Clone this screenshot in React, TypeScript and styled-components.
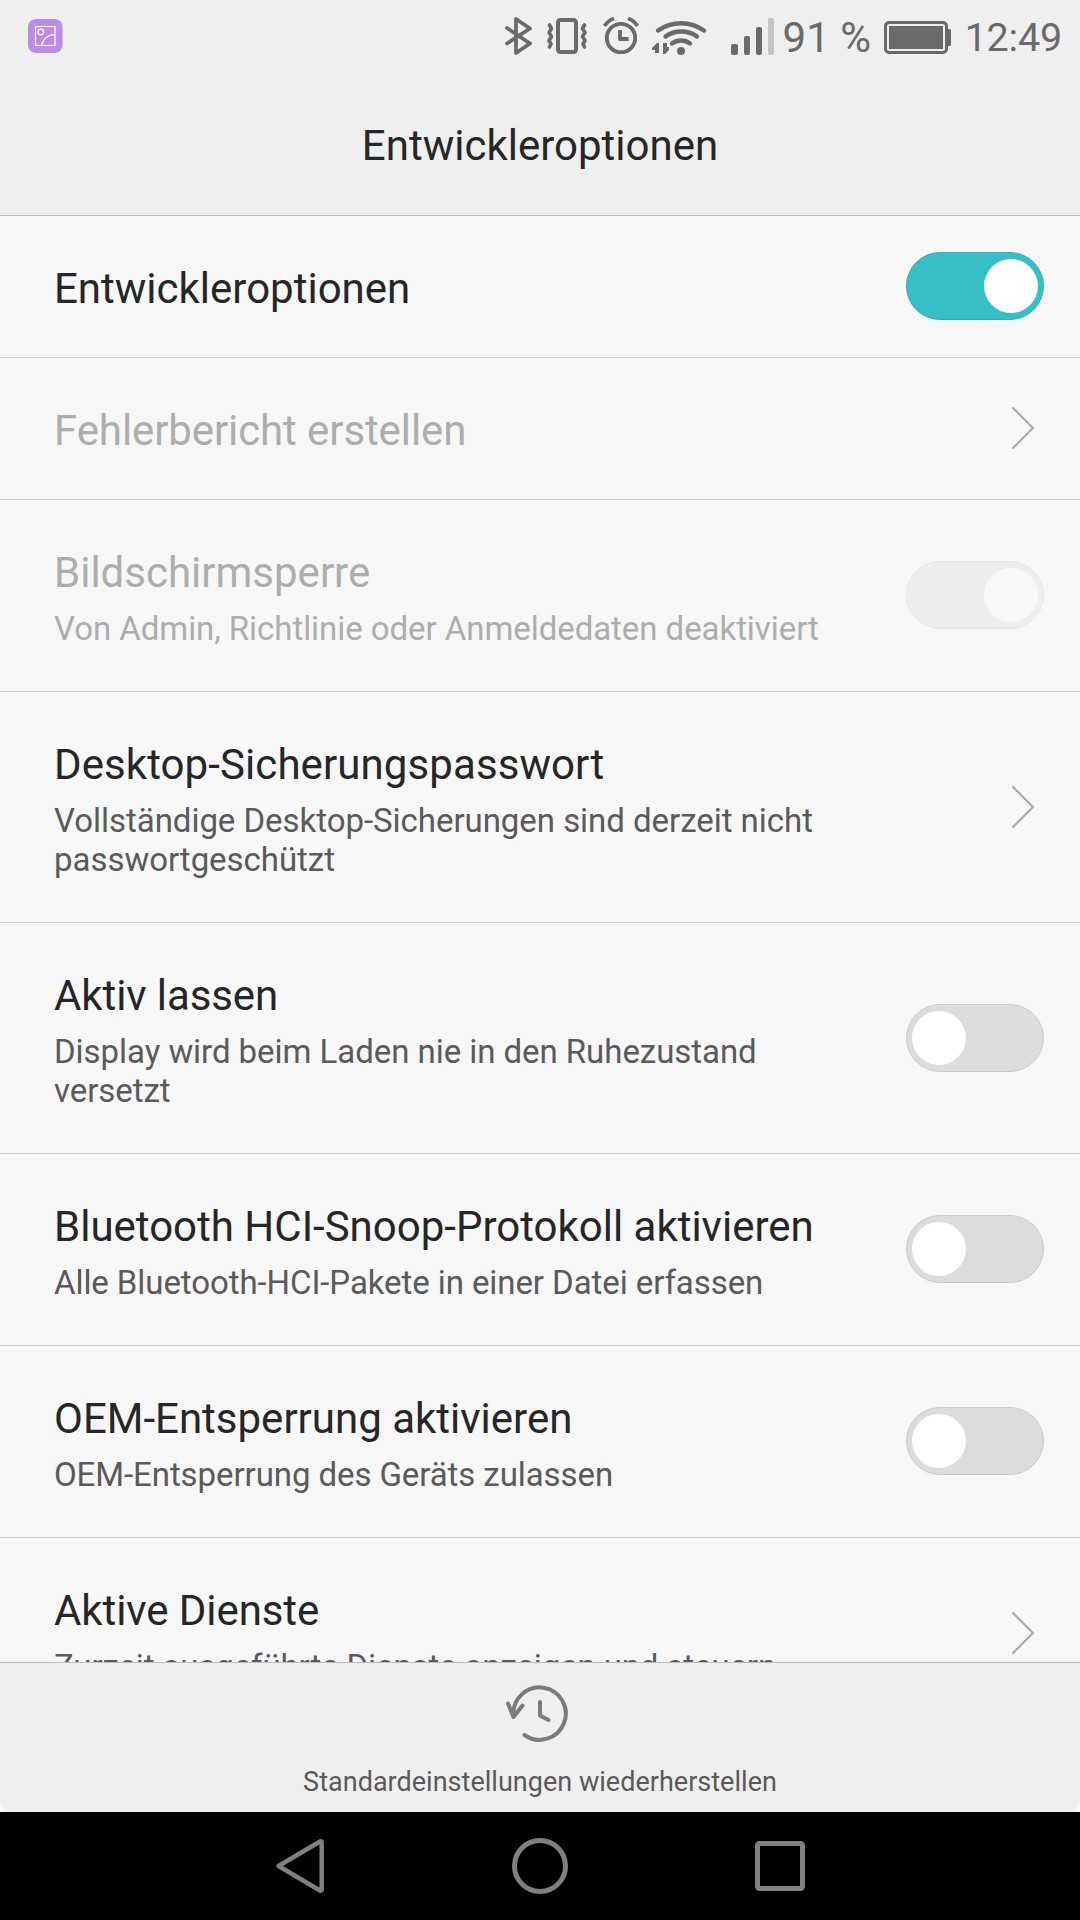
import React from "react";
import styled, { createGlobalStyle, css } from "styled-components";

const GlobalStyle = createGlobalStyle`
  * { box-sizing: border-box; }
  body { margin: 0; background: #f7f7f7; }
`;

const Screen = styled.div`
  width: 1080px;
  height: 1920px;
  display: flex;
  flex-direction: column;
  overflow: hidden;
  background: #f7f7f7;
  color: #262626;
  font-family: Roboto, "Noto Sans", sans-serif;
`;

const Header = styled.header`
  height: 216px;
  flex: none;
  background: #efefef;
  border-bottom: 1px solid #bdbdbd;
`;

const StatusBar = styled.div`
  height: 72px;
  display: flex;
  align-items: center;
  justify-content: space-between;
  padding: 0 18px 0 28px;
  color: #6a6a6a;
`;

const StatusGroup = styled.div`
  display: flex;
  align-items: center;
`;

const StatusIcons = styled.svg`
  display: block;
  width: 294px;
  height: 72px;
  margin-right: -1.4px;
`;

const BatteryIcon = styled.svg`
  display: block;
  width: 68px;
  height: 72px;
  margin: 0 12.7px 0 13px;
`;

const StatusText = styled.span<{ $size: number; $tracking?: number }>`
  font-size: ${(p) => p.$size}px;
  letter-spacing: ${(p) => p.$tracking ?? 0}px;
  line-height: 48px;
  padding-top: 4px;
  white-space: pre;
`;

const Title = styled.h1`
  margin: 0;
  height: 143px;
  padding-top: 49px;
  text-align: center;
  font-size: 42px;
  font-weight: 400;
  line-height: 49px;
`;

const List = styled.main`
  flex: 1;
  min-height: 0;
  overflow: hidden;
`;

const Row = styled.div<{ $disabled?: boolean }>`
  display: flex;
  align-items: center;
  justify-content: space-between;
  padding: 46px 36px 46px 54px;
  border-bottom: 1px solid #d0d0d0;
  ${(p) => p.$disabled && css`color: #adadad;`}
`;

const RowText = styled.div`
  width: 796px;
  margin: 2px 0 -2px;
`;

const RowTitle = styled.div<{ $tracking?: number }>`
  font-size: 42px;
  line-height: 49px;
  letter-spacing: ${(p) => p.$tracking ?? 0}px;
`;

const RowSummary = styled.div<{ $disabled?: boolean; $tracking?: number }>`
  margin: 12px 0 -1px;
  font-size: 33px;
  line-height: 39px;
  letter-spacing: ${(p) => p.$tracking ?? 0}px;
  color: ${(p) => (p.$disabled ? "#adadad" : "#5a5a5a")};
`;

const Track = styled.div<{ $on?: boolean; $disabled?: boolean }>`
  flex: none;
  display: flex;
  align-items: center;
  justify-content: ${(p) => (p.$on ? "flex-end" : "flex-start")};
  width: 138px;
  height: 68px;
  margin: -10.5px 0 -9.5px;
  padding: 0 5px;
  border-radius: 34px;
  border: 1px solid ${(p) => (p.$disabled ? "#e7e7e7" : p.$on ? "#34aeb3" : "#cbcbcb")};
  background: ${(p) => (p.$disabled ? "#eeeeee" : p.$on ? "#36c0c6" : "#dcdcdc")};
`;

const Knob = styled.div<{ $disabled?: boolean }>`
  width: 54px;
  height: 54px;
  border-radius: 50%;
  background: ${(p) => (p.$disabled ? "#f8f8f8" : "#ffffff")};
`;

const ChevronIcon = styled.svg`
  flex: none;
  display: block;
  width: 24px;
  height: 44px;
  margin: -0.5px 9px 0.5px 0;
`;

const Footer = styled.footer`
  flex: none;
  height: 150px;
  border-top: 1px solid #bdbdbd;
  background: #f7f7f7;
`;

const FooterAction = styled.div`
  height: 149px;
  display: flex;
  flex-direction: column;
  align-items: center;
  background: #efefef;
  border-radius: 0 0 14px 14px;
  color: #5a5a5a;
  font-size: 27px;
  line-height: 32px;
  letter-spacing: 0.02px;
`;

const RestoreIcon = styled.svg`
  display: block;
  width: 66px;
  height: 62px;
  margin: 20px 6px 21px 0;
`;

const NavBar = styled.nav`
  flex: none;
  height: 108px;
  display: flex;
  justify-content: center;
  align-items: center;
  gap: 180px;
  background: #000;
`;

const NavIcon = styled.svg`
  display: block;
  width: 60px;
  height: 60px;
`;

function Chevron() {
  return (
    <ChevronIcon viewBox="0 0 24 44" fill="none" stroke="#aaaaaa" strokeWidth="2" strokeLinecap="round">
      <path d="M2 2 22 22 2 42" />
    </ChevronIcon>
  );
}

function Toggle({ on, disabled }: { on?: boolean; disabled?: boolean }) {
  return (
    <Track $on={on} $disabled={disabled}>
      <Knob $disabled={disabled} />
    </Track>
  );
}

type Item = {
  title: string;
  titleTracking?: number;
  summary?: string;
  summaryTracking?: number;
  control: "toggle" | "chevron";
  on?: boolean;
  disabled?: boolean;
};

const items: Item[] = [
  { title: "Entwickleroptionen", control: "toggle", on: true },
  { title: "Fehlerbericht erstellen", titleTracking: -0.1, control: "chevron", disabled: true },
  {
    title: "Bildschirmsperre",
    summary: "Von Admin, Richtlinie oder Anmeldedaten deaktiviert",
    summaryTracking: -0.06,
    control: "toggle",
    on: true,
    disabled: true,
  },
  {
    title: "Desktop-Sicherungspasswort",
    titleTracking: 0.09,
    summary: "Vollständige Desktop-Sicherungen sind derzeit nicht passwortgeschützt",
    summaryTracking: -0.04,
    control: "chevron",
  },
  {
    title: "Aktiv lassen",
    titleTracking: -0.1,
    summary: "Display wird beim Laden nie in den Ruhezustand versetzt",
    summaryTracking: -0.05,
    control: "toggle",
  },
  {
    title: "Bluetooth HCI-Snoop-Protokoll aktivieren",
    summary: "Alle Bluetooth-HCI-Pakete in einer Datei erfassen",
    summaryTracking: -0.08,
    control: "toggle",
  },
  {
    title: "OEM-Entsperrung aktivieren",
    summary: "OEM-Entsperrung des Geräts zulassen",
    summaryTracking: -0.08,
    control: "toggle",
  },
  {
    title: "Aktive Dienste",
    titleTracking: -0.08,
    summary: "Zurzeit ausgeführte Dienste anzeigen und steuern",
    summaryTracking: -0.12,
    control: "chevron",
  },
];

function GalleryIcon() {
  return (
    <svg width="35" height="72" viewBox="28 0 35 72" fill="none" stroke="#fff" strokeWidth="1.2">
      <rect x="28" y="19" width="34.5" height="34" rx="8" fill="#bd8be6" stroke="none" />
      <rect x="35.5" y="26.5" width="19.5" height="19" />
      <circle cx="40.8" cy="32" r="2.8" />
      <path d="M41.5 45.5C43 39 48 34.5 55 34.5" />
    </svg>
  );
}

function SystemIcons() {
  return (
    <StatusIcons viewBox="490 0 294 72" fill="none" stroke="#6a6a6a" strokeLinecap="round" strokeLinejoin="round">
      <path strokeWidth="3.8" d="M507 28 530 43.5 516 53V19L530 28.5 507 43.5" />
      <rect x="558" y="20" width="18" height="32" rx="2.5" strokeWidth="4" />
      <path
        strokeWidth="3.6"
        d="M549.5 25l2 3.500-2.500 4 2.500 4-2.500 4 2 3.500-1.500 3M584.5 25l-2 3.500 2.500 4-2.500 4 2.500 4-2 3.500 1.500 3"
      />
      <circle cx="621" cy="38" r="14.2" strokeWidth="3.8" />
      <path
        strokeWidth="3.8"
        strokeLinecap="butt"
        d="M620 30V39h8.500M604.500 26Q608 20.500 614 18.500M637.500 26Q634 20.500 628 18.500"
      />
      <g strokeWidth="4.4">
        <path d="M658 30.500a40 40 0 0 1 46 0" />
        <path d="M665.500 36.500a27 27 0 0 1 31.500 0" />
        <path d="M672 43.500a15 15 0 0 1 18 0" />
      </g>
      <g fill="#6a6a6a" stroke="none">
        <circle cx="681" cy="51" r="4" />
        <path d="M659 43v10h-4v-3h-3v-2l5-5zM663 43h4v4h2v3l-4 4h-2z" />
        <rect x="731" y="44" width="7" height="11" rx="2" />
        <rect x="744" y="36" width="6" height="19" rx="2" />
        <rect x="756" y="27" width="6" height="28" rx="2" />
        <rect x="768" y="18" width="6" height="37" rx="2" fill="#c5c5c5" />
      </g>
    </StatusIcons>
  );
}

export default function App() {
  return (
    <>
      <GlobalStyle />
      <Screen>
        <Header>
          <StatusBar>
            <GalleryIcon />
            <StatusGroup>
              <SystemIcons />
              <StatusText $size={42}>91 %</StatusText>
              <BatteryIcon viewBox="884 0 68 72">
                <rect x="885.5" y="22.500" width="61" height="30" rx="3.500" fill="none" stroke="#6a6a6a" strokeWidth="3" />
                <rect x="889" y="26" width="54" height="23" fill="#6a6a6a" />
                <path d="M948 29h1.500q1.500 0 1.500 1.500v14q0 1.500-1.500 1.500H948z" fill="#6a6a6a" />
              </BatteryIcon>
              <StatusText $size={39.5} $tracking={-0.2}>
                12:49
              </StatusText>
            </StatusGroup>
          </StatusBar>
          <Title>Entwickleroptionen</Title>
        </Header>
        <List>
          {items.map((item) => (
            <Row key={item.title} $disabled={item.disabled}>
              <RowText>
                <RowTitle $tracking={item.titleTracking}>{item.title}</RowTitle>
                {item.summary && (
                  <RowSummary $disabled={item.disabled} $tracking={item.summaryTracking}>
                    {item.summary}
                  </RowSummary>
                )}
              </RowText>
              {item.control === "toggle" ? <Toggle on={item.on} disabled={item.disabled} /> : <Chevron />}
            </Row>
          ))}
        </List>
        <Footer>
          <FooterAction>
            <RestoreIcon
              viewBox="504 1683 66 62"
              fill="none"
              stroke="#7b7b7b"
              strokeWidth="4"
              strokeLinecap="round"
              strokeLinejoin="round"
            >
              <path d="M513.500 1716A26.200 26.200 0 1 1 524.500 1735M508 1703.500l5.500 13.500 9-11.500M540 1702v13.500l8.500 4.500" />
            </RestoreIcon>
            <span>Standardeinstellungen wiederherstellen</span>
          </FooterAction>
        </Footer>
        <NavBar>
          <NavIcon viewBox="270 1836 60 60" fill="none" stroke="#808080" strokeWidth="4.500" strokeLinejoin="round">
            <path d="M278.500 1866 320 1841.500Q321.700 1841 321.700 1842.500V1889.500Q321.700 1891 320 1890.500Z" />
          </NavIcon>
          <NavIcon viewBox="510 1836 60 60" fill="none" stroke="#808080" strokeWidth="5">
            <circle cx="540" cy="1866" r="25.500" />
          </NavIcon>
          <NavIcon viewBox="750 1836 60 60" fill="none" stroke="#808080" strokeWidth="5">
            <rect x="757.500" y="1843.500" width="45" height="45" rx="2" />
          </NavIcon>
        </NavBar>
      </Screen>
    </>
  );
}
